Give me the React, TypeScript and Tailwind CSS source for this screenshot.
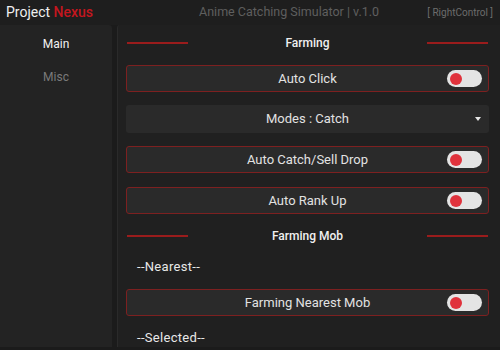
const font = { fontFamily: 'Roboto, "Open Sans", sans-serif' };

function Toggle() {
  return (
    <div className="w-[35px] h-[17px] rounded-full bg-[#e4e4e4] flex items-center px-[3px]">
      <div className="w-[12px] h-[12px] rounded-full bg-[#e0323c]" />
    </div>
  );
}

function ToggleRow({ label, className = '' }: { label: string; className?: string }) {
  return (
    <div
      className={`relative h-[27px] rounded-[3px] border border-[#7d2020] bg-[#2a2a2a] flex items-center justify-center ${className}`}
    >
      <span className="text-[13px] text-[#e2e2e2]">{label}</span>
      <div className="absolute right-[6px] top-[4px]">
        <Toggle />
      </div>
    </div>
  );
}

function SectionHeader({ label, className = '' }: { label: string; className?: string }) {
  return (
    <div className={`h-[16px] flex items-center justify-between ${className}`}>
      <div className="w-[61px] h-[1.5px] bg-[#9a1c1c] ml-[1px]" />
      <span className="text-[12px] font-medium text-[#f0f0f0]">{label}</span>
      <div className="w-[61px] h-[1.5px] bg-[#9a1c1c] mr-[1px]" />
    </div>
  );
}

export default function App() {
  return (
    <div className="w-[500px] h-[350px] bg-[#1b1b1b] overflow-hidden flex flex-col" style={font}>
      <div className="h-[25px] shrink-0 flex items-center px-[6px] bg-[#1e1e1e]">
        <span className="text-[14px] text-[#efefef]">
          Project <span className="text-[#c4161e] font-medium">Nexus</span>
        </span>
        <span className="ml-[106px] text-[12.5px] text-[#5f5f5f]">Anime Catching Simulator | v.1.0</span>
        <span className="ml-auto text-[10px] text-[#6c6c6c] pr-[1px]">[ RightControl ]</span>
      </div>
      <div className="flex-1 flex min-h-0 pb-[3px]">
        <div className="w-[112px] shrink-0 bg-[#232323] rounded-tr-[3px] flex flex-col items-center pt-[10px]">
          <span className="h-[18px] text-[12px] text-[#f2f2f2]">Main</span>
          <span className="mt-[15px] h-[18px] text-[12px] text-[#7a7a7a]">Misc</span>
        </div>
        <div className="ml-[5px] flex-1 bg-[#202020] border-l border-[#2a2a2a] rounded-tl-[3px] pl-[8px] pr-[11px] pt-[10px] flex flex-col overflow-hidden">
          <SectionHeader label="Farming" />
          <ToggleRow label="Auto Click" className="mt-[14px]" />
          <div className="relative mt-[13px] h-[28px] shrink-0 rounded-[3px] bg-[#2a2a2a] flex items-center justify-center">
            <span className="text-[13px] text-[#e2e2e2]">Modes : Catch</span>
            <div className="absolute right-[8px] top-[12px] w-0 h-0 border-l-[3.5px] border-r-[3.5px] border-t-[4px] border-l-transparent border-r-transparent border-t-[#e6e6e6]" />
          </div>
          <ToggleRow label="Auto Catch/Sell Drop" className="mt-[13px] shrink-0" />
          <ToggleRow label="Auto Rank Up" className="mt-[14px] shrink-0" />
          <SectionHeader label="Farming Mob" className="mt-[14px] shrink-0" />
          <div className="mt-[15px] h-[16px] shrink-0 flex items-center pl-[11px] text-[13px] tracking-[0.3px] text-[#e8e8e8]">--Nearest--</div>
          <ToggleRow label="Farming Nearest Mob" className="mt-[14px] shrink-0" />
          <div className="mt-[14px] h-[16px] shrink-0 flex items-center pl-[11px] text-[13px] tracking-[0.3px] text-[#e8e8e8]">--Selected--</div>
        </div>
      </div>
    </div>
  );
}
